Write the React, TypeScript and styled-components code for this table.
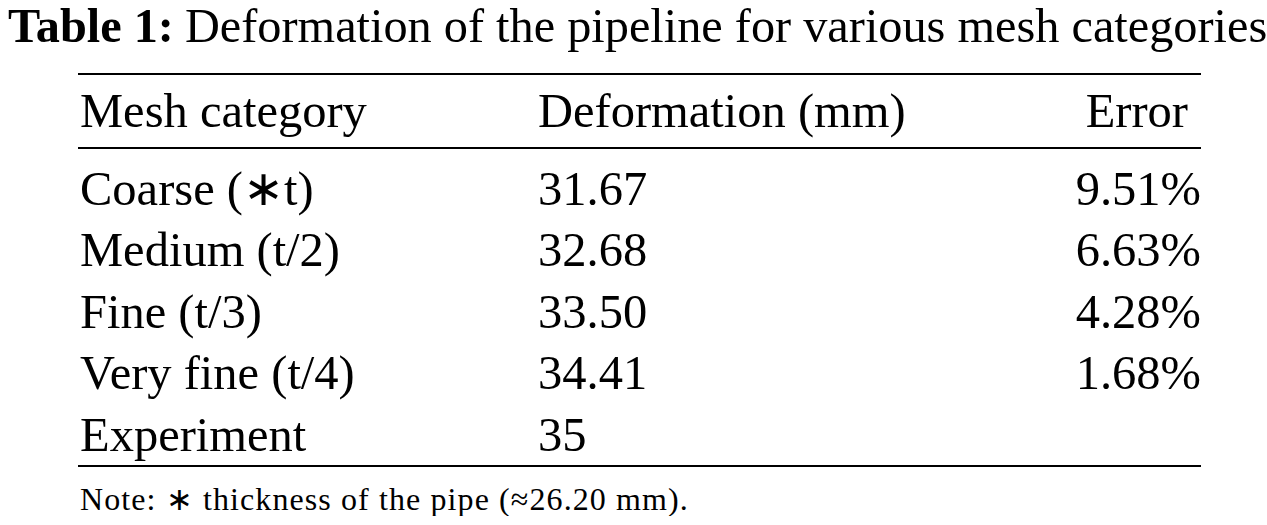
import styled, { createGlobalStyle } from 'styled-components';

const GlobalStyle = createGlobalStyle`
    body {
        margin: 0;
        background: #ffffff;
        color: #000000;
        font-family: "Liberation Serif", "Times New Roman", serif;
    }
`

const Page = styled.div`
    padding: 0 8px;
`

const Caption = styled.div`
    font-size: 48.3px;
    line-height: 52px;
    white-space: nowrap;
`

const CaptionLabel = styled.span`
    font-weight: bold;
    margin-right: 11px;
`

const TableBlock = styled.div`
    margin: 21px 0 0 70px;
    width: 1123px;
    border-top: 2px solid #000;
    border-bottom: 2px solid #000;
`

const Row = styled.div<{ $head?: boolean }>`
    display: grid;
    grid-template-columns: 458px 1fr 200px;
    font-size: 48.5px;
    line-height: 61.5px;
    padding: ${p => (p.$head ? '5px 0 5px' : '0')};
    border-bottom: ${p => (p.$head ? '2px solid #000' : 'none')};
`

const Body = styled.div`
    padding: 9px 0 0;
`

const Cell = styled.div<{ $right?: boolean; $inset?: number }>`
    text-align: ${p => (p.$right ? 'right' : 'left')};
    padding-left: ${p => (p.$right ? 0 : 2)}px;
    padding-right: ${p => p.$inset ?? 0}px;
    white-space: nowrap;
`

const Note = styled.div`
    margin: 15px 0 0 72px;
    font-size: 32px;
    line-height: 34px;
    letter-spacing: 1.1px;
`

const rows = [
    ['Coarse (\u2217t)', '31.67', '9.51%'],
    ['Medium (t/2)', '32.68', '6.63%'],
    ['Fine (t/3)', '33.50', '4.28%'],
    ['Very fine (t/4)', '34.41', '1.68%'],
    ['Experiment', '35', ''],
]

function App() {
    return (
        <Page>
            <GlobalStyle />
            <Caption>
                <CaptionLabel>Table 1:</CaptionLabel>
                Deformation of the pipeline for various mesh categories
            </Caption>
            <TableBlock>
                <Row $head>
                    <Cell>Mesh category</Cell>
                    <Cell>Deformation (mm)</Cell>
                    <Cell $right $inset={13}>Error</Cell>
                </Row>
                <Body>
                    {rows.map(r => (
                        <Row key={r[0]}>
                            <Cell>{r[0]}</Cell>
                            <Cell>{r[1]}</Cell>
                            <Cell $right>{r[2]}</Cell>
                        </Row>
                    ))}
                </Body>
            </TableBlock>
            <Note>Note: {'\u2217'} thickness of the pipe (&asymp;26.20 mm).</Note>
        </Page>
    )
}

export default App
